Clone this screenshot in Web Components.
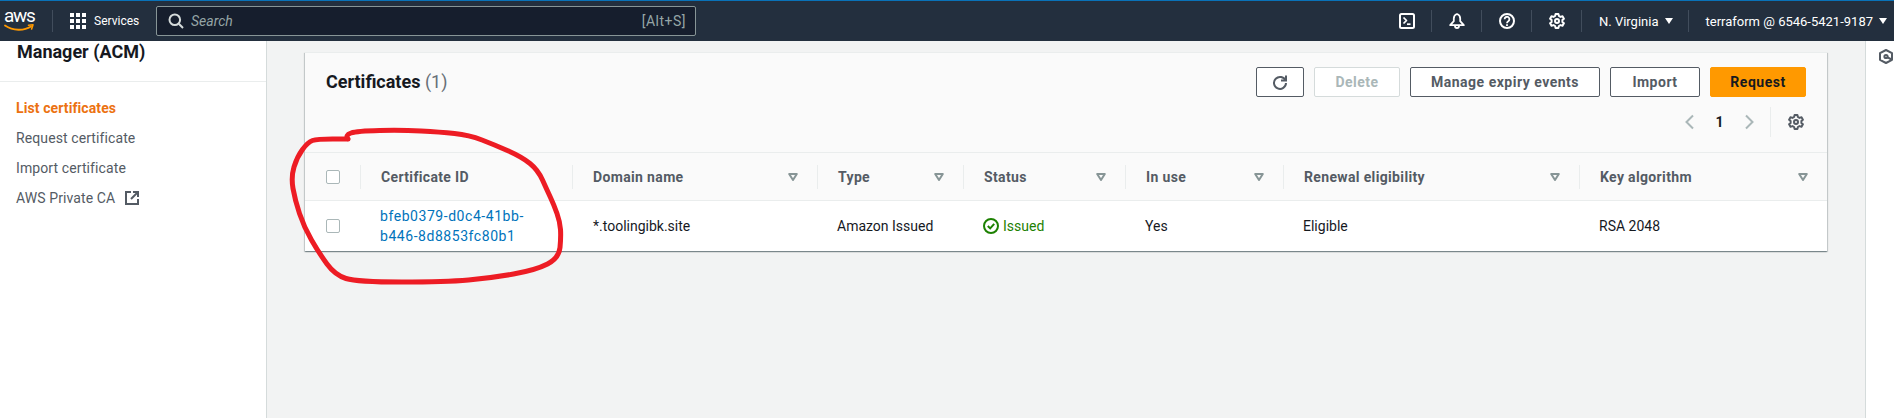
<!DOCTYPE html>
<html lang="en">
<head>
<meta charset="utf-8">
<title>Certificates</title>
<style>
    html, body{
        margin: 0;
        height: 418px;
        overflow: hidden;
        font-family: Roboto, "Liberation Sans", sans-serif;
        font-size: 14px;
        color: #16191f;
    }
    body{
        display: flex;
        flex-direction: column;
    }
</style>
</head>
<body>
    <aws-topbar></aws-topbar>
    <app-layout>
        <side-nav slot="nav"></side-nav>
        <cert-card></cert-card>
    </app-layout>
    <red-scribble></red-scribble>

<script>
    (() => {
        'use strict';

        const GEAR = `<svg width="16" height="16" viewBox="0 0 16 16" fill="none" stroke="currentColor" stroke-width="2" stroke-linejoin="round">
            <path d="M6.6 1h2.8l.5 2 1.6.9 2-.6 1.4 2.4-1.5 1.4v1.8l1.5 1.4-1.4 2.4-2-.6-1.6.9-.5 2H6.6l-.5-2-1.6-.9-2 .6-1.4-2.4 1.5-1.4V7.1L1.1 5.7l1.4-2.4 2 .6 1.6-.9z"/>
            <circle cx="8" cy="8" r="2"/></svg>`;

        class AwsTopbar extends HTMLElement{
            constructor(){
                super();
                this.attachShadow({mode: 'open'}).innerHTML = `
                <style>
                    :host{
                        display: flex;
                        flex: none;
                        align-items: center;
                        height: 40px;
                        box-sizing: content-box;
                        border-top: 1px solid #0972b8;
                        background-color: #232f3e;
                        color: #fff;
                        font-size: 13px;
                        padding-right: 7px;
                        position: relative;
                        z-index: 2;
                    }
                    svg{ display: block; flex: none; }
                    .logo{
                        flex: none;
                        width: 30px;
                        margin-left: 4px;
                    }
                    .logo span{
                        display: block;
                        font-size: 19px;
                        letter-spacing: -1.3px;
                        line-height: 14px;
                    }
                    .sep{
                        flex: none;
                        width: 1px;
                        height: 22px;
                        margin: 0 17px 0 16px;
                        background-color: #414d5c;
                    }
                    .logoSep{ margin: 0 17px 0 18px; }
                    .services{
                        flex: none;
                        width: 45px;
                        margin-left: 8px;
                        font-size: 12px;
                        white-space: nowrap;
                    }
                    .search{
                        display: flex;
                        align-items: center;
                        box-sizing: border-box;
                        width: 540px;
                        height: 30px;
                        margin-left: 17px;
                        padding: 0 9px 0 11px;
                        border: 1px solid #879596;
                        border-radius: 2px;
                        background-color: #161e2d;
                        color: #95a5a6;
                        font-size: 14px;
                    }
                    .search i{ margin-left: 7px; flex: 1; }
                    .search span{ letter-spacing: .5px; }
                    .right{ display: flex; align-items: center; margin-left: auto; }
                    .caret{
                        flex: none;
                        margin-left: 6px;
                        border-left: 4px solid transparent;
                        border-right: 4px solid transparent;
                        border-top: 6px solid #fff;
                    }
                </style>
                <div class="logo">
                    <span>aws</span>
                    <svg width="30" height="10" viewBox="0 0 30 10" fill="none" stroke="#f90" stroke-linecap="round" stroke-linejoin="round">
                        <path d="M1 2.5C9 8 20 8 27 3.5" stroke-width="1.8"/>
                        <path d="M24.5 2.2 29 1.8 27.6 6" stroke-width="1.6"/>
                    </svg>
                </div>
                <span class="sep logoSep"></span>
                <svg width="16" height="16" viewBox="0 0 16 16" fill="#fff" shape-rendering="crispEdges">
                    <rect width="4" height="4"/><rect x="6" width="4" height="4"/><rect x="12" width="4" height="4"/>
                    <rect y="6" width="4" height="4"/><rect x="6" y="6" width="4" height="4"/><rect x="12" y="6" width="4" height="4"/>
                    <rect y="12" width="4" height="4"/><rect x="6" y="12" width="4" height="4"/><rect x="12" y="12" width="4" height="4"/>
                </svg>
                <span class="services">Services</span>
                <div class="search">
                    <svg width="16" height="16" viewBox="0 0 16 16" fill="none" stroke="#d5dbdb" stroke-width="2">
                        <circle cx="6.8" cy="6.8" r="5.3"/><path d="M10.8 10.8 15 15"/>
                    </svg>
                    <i>Search</i>
                    <span>[Alt+S]</span>
                </div>
                <div class="right">
                    <svg width="16" height="16" viewBox="0 0 16 16" fill="none" stroke="#fff" stroke-width="2" stroke-linejoin="round">
                        <rect x="1" y="1" width="14" height="14" rx="1.5"/>
                        <path d="M4.5 4.5 7.5 7.5 4.5 10.5" stroke-width="1.7"/><path d="M8 11.2h3.5" stroke-width="1.7"/>
                    </svg>
                    <span class="sep"></span>
                    <svg width="16" height="16" viewBox="0 0 16 16" fill="none" stroke="#fff" stroke-width="1.8" stroke-linejoin="round">
                        <path d="M8 1C6 1.6 4.8 3.2 4.8 5.5v2.7L1.2 12.2h13.6l-3.6-4V5.5C11.2 3.2 10 1.6 8 1z"/>
                        <path d="M6 13a2 2 0 0 0 4 0"/>
                    </svg>
                    <span class="sep"></span>
                    <svg width="16" height="16" viewBox="0 0 16 16" fill="none" stroke="#fff" stroke-width="2">
                        <circle cx="8" cy="8" r="7"/>
                        <path d="M5.6 6.2a2.4 2.4 0 1 1 3.7 2C8.4 8.8 8 9.2 8 10.2" stroke-width="1.8"/>
                        <path d="M8 11.2v1.8" stroke-width="1.8"/>
                    </svg>
                    <span class="sep"></span>
                    ${GEAR}
                    <span class="sep"></span>
                    <span>N. Virginia</span><span class="caret"></span>
                    <span class="sep" style="margin:0 17px 0 15px"></span>
                    <span>terraform @ 6546-5421-9187</span><span class="caret"></span>
                </div>`;
            }
        }

        class AppLayout extends HTMLElement{
            constructor(){
                super();
                this.attachShadow({mode: 'open'}).innerHTML = `
                <style>
                    :host{
                        display: flex;
                        flex: 1;
                        min-height: 0;
                    }
                    .main{
                        flex: 1;
                        min-width: 0;
                        padding: 11px 38px 0;
                        background-color: #f2f3f3;
                        overflow: hidden;
                    }
                    .rail{
                        flex: none;
                        box-sizing: border-box;
                        width: 29px;
                        padding: 8px 0 0 13px;
                        border-left: 1px solid #d5dbdb;
                        background-color: #fff;
                    }
                    svg{ display: block; }
                </style>
                <slot name="nav"></slot>
                <div class="main">
                    <slot></slot>
                </div>
                <div class="rail">
                    <svg width="14" height="15" viewBox="0 0 14 15" fill="none" stroke="#545b64" stroke-width="2" stroke-linejoin="round">
                        <path d="M7 1 13 4.2v6.6L7 14 1 10.8V4.2z"/>
                        <circle cx="7" cy="7.5" r="1.6"/><path d="M8.6 8.4 12.5 10.5"/>
                    </svg>
                </div>`;
            }
        }

        class SideNav extends HTMLElement{
            constructor(){
                super();
                this.attachShadow({mode: 'open'}).innerHTML = `
                <style>
                    :host{
                        display: block;
                        flex: none;
                        box-sizing: border-box;
                        width: 267px;
                        border-right: 1px solid #d5dbdb;
                        background-color: #fff;
                        color: #545b64;
                    }
                    h2{
                        margin: 0;
                        height: 40px;
                        padding-left: 17px;
                        border-bottom: 1px solid #eaeded;
                        font-size: 18px;
                        font-weight: 700;
                        line-height: 22px;
                        color: #16191f;
                    }
                    ul{
                        list-style: none;
                        margin: 0;
                        padding: 11px 16px 0;
                        letter-spacing: .1px;
                    }
                    li{
                        display: flex;
                        align-items: center;
                        height: 30px;
                    }
                    .active{ color: #ec7211; font-weight: 700; }
                    svg{ margin-left: 9px; }
                </style>
                <h2>Manager (ACM)</h2>
                <ul>
                    <li class="active">List certificates</li>
                    <li>Request certificate</li>
                    <li>Import certificate</li>
                    <li>AWS Private CA
                        <svg width="16" height="16" viewBox="0 0 16 16" fill="none" stroke="#545b64" stroke-width="2">
                            <path d="M7 2H2v12h12V9"/><path d="M9 2h5v5"/><path d="M14 2 7 9"/>
                        </svg>
                    </li>
                </ul>`;
            }
        }

        class AwsBtn extends HTMLElement{
            constructor(){
                super();
                this.attachShadow({mode: 'open'}).innerHTML = `
                <style>
                    :host{
                        display: inline-flex;
                        align-items: center;
                        justify-content: center;
                        box-sizing: border-box;
                        height: 30px;
                        border: 1px solid #545b64;
                        border-radius: 2px;
                        background-color: #fff;
                        color: #545b64;
                        font-weight: 700;
                        letter-spacing: .5px;
                    }
                    :host([variant="disabled"]){
                        border-color: #d5dbdb;
                        color: #aab7b8;
                    }
                    :host([variant="primary"]){
                        border-color: #f90;
                        background-color: #f90;
                        color: #16191f;
                    }
                </style>
                <slot></slot>`;
            }
        }

        class CertCard extends HTMLElement{
            constructor(){
                super();
                this.attachShadow({mode: 'open'}).innerHTML = `
                <style>
                    :host{
                        display: block;
                        border-top: 1px solid #eaeded;
                        background-color: #fafafa;
                        box-shadow: 0 1px 1px 0 rgba(0,28,36,.3), 1px 1px 1px 0 rgba(0,28,36,.15), -1px 1px 1px 0 rgba(0,28,36,.15);
                    }
                    .head{
                        display: flex;
                        justify-content: space-between;
                        height: 99px;
                        box-sizing: border-box;
                        padding: 14px 21px 0;
                    }
                    h2{
                        margin: 0;
                        font-size: 18px;
                        line-height: 30px;
                        font-weight: 700;
                    }
                    h2 span{ font-weight: 400; color: #687078; }
                    .tools{
                        display: flex;
                        flex-direction: column;
                        align-items: flex-end;
                        gap: 10px;
                    }
                    .actions{ display: flex; gap: 10px; }
                    .pager{
                        display: flex;
                        align-items: center;
                        height: 30px;
                        padding-right: 2px;
                        color: #545b64;
                    }
                    .pager b{ width: 43px; text-align: center; color: #16191f; font-weight: 700; }
                    .pager i{
                        width: 1px;
                        height: 30px;
                        margin: 0 17px 0 13px;
                        background-color: #eaeded;
                    }
                    svg{ display: block; }
                </style>
                <div class="head">
                    <h2>Certificates <span>(1)</span></h2>
                    <div class="tools">
                        <div class="actions">
                            <aws-btn style="width:48px">
                                <svg width="16" height="16" viewBox="0 0 16 16" fill="none" stroke="currentColor" stroke-width="2">
                                    <path d="M13.5 6.5A6 6 0 1 0 14 9"/><path d="M14 1.5V6.5H9" stroke-linejoin="miter"/>
                                </svg>
                            </aws-btn>
                            <aws-btn variant="disabled" style="width:86px">Delete</aws-btn>
                            <aws-btn style="width:190px">Manage expiry events</aws-btn>
                            <aws-btn style="width:90px">Import</aws-btn>
                            <aws-btn variant="primary" style="width:96px">Request</aws-btn>
                        </div>
                        <div class="pager">
                            <svg width="16" height="16" viewBox="0 0 16 16" fill="none" stroke="#aab7b8" stroke-width="2"><path d="M11 1.5 4.5 8 11 14.5"/></svg>
                            <b>1</b>
                            <svg width="16" height="16" viewBox="0 0 16 16" fill="none" stroke="#aab7b8" stroke-width="2"><path d="M5 1.5 11.5 8 5 14.5"/></svg>
                            <i></i>
                            ${GEAR}
                        </div>
                    </div>
                </div>
                <cert-table></cert-table>`;
            }
        }

        class CertTable extends HTMLElement{
            constructor(){
                super();
                const columns = [
                    {title: 'Certificate ID', sort: false},
                    {title: 'Domain name', sort: true},
                    {title: 'Type', sort: true},
                    {title: 'Status', sort: true},
                    {title: 'In use', sort: true},
                    {title: 'Renewal eligibility', sort: true},
                    {title: 'Key algorithm', sort: true}
                ];
                const headers = columns.map((column) => `
                    <div class="th"><div class="thInner">
                        <span>${column.title}</span>
                        ${column.sort ? '<svg width="10" height="8" viewBox="0 0 10 8" fill="#fafafa" stroke="#879596" stroke-width="2" stroke-linejoin="round"><path d="M1.2 1h7.6L5 7z"/></svg>' : ''}
                    </div></div>`).join('');
                this.attachShadow({mode: 'open'}).innerHTML = `
                <style>
                    :host{
                        display: grid;
                        grid-template-columns: 55px 212px 245px 146px 162px 158px 296px 1fr;
                        grid-template-rows: 48px 50px;
                        border-top: 1px solid #eaeded;
                    }
                    .th, .check{
                        display: flex;
                        align-items: center;
                    }
                    .th{
                        border-bottom: 1px solid #eaeded;
                        color: #545b64;
                        font-weight: 700;
                        letter-spacing: .35px;
                    }
                    .thInner{
                        flex: 1;
                        display: flex;
                        align-items: center;
                        justify-content: space-between;
                        height: 24px;
                        padding: 0 19px 0 20px;
                        border-left: 1px solid #eaeded;
                    }
                    .check{
                        padding-left: 21px;
                    }
                    .head{ border-bottom: 1px solid #eaeded; }
                    .box{
                        box-sizing: border-box;
                        width: 14px;
                        height: 14px;
                        border: 1px solid #aab7b8;
                        border-radius: 2px;
                        background-color: #fff;
                    }
                    .td{
                        display: flex;
                        align-items: center;
                        padding-left: 20px;
                        background-color: #fff;
                        line-height: 20px;
                    }
                    .domain{ padding-left: 21px; }
                    .row{ background-color: #fff; }
                    .link{ color: #0073bb; width: 150px; letter-spacing: .55px; }
                    .status{ color: #1d8102; gap: 4px; }
                    svg{ display: block; }
                </style>
                <div class="check head"><span class="box"></span></div>
                ${headers}
                <div class="check row"><span class="box"></span></div>
                <div class="td"><span class="link">bfeb0379-d0c4-41bb-b446-8d8853fc80b1</span></div>
                <div class="td domain">*.toolingibk.site</div>
                <div class="td">Amazon Issued</div>
                <div class="td status">
                    <svg width="16" height="16" viewBox="0 0 16 16" fill="none" stroke="#1d8102" stroke-width="2">
                        <circle cx="8" cy="8" r="7"/><path d="M4.8 8 7.2 10.4 11.2 5.8"/>
                    </svg>
                    Issued
                </div>
                <div class="td">Yes</div>
                <div class="td">Eligible</div>
                <div class="td">RSA 2048</div>`;
            }
        }

        // hand drawn circle on top of the screenshot
        class RedScribble extends HTMLElement{
            constructor(){
                super();
                const points = [[348,139],[345,135],[357,131],[402,130],[440,132],[469,135],[495,145],[522,157],[538,170],
                    [547,190],[554,205],[560,222],[561,237],[559,258],[536,270],[491,278],[446,282],[357,282],[335,275],
                    [319,253],[304,227],[295,200],[291,177],[297,157],[308,142],[317,139],[348,139]];
                let d = `M${points[0].join(' ')}`;
                for(let i = 1; i < points.length - 1; i++){
                    const midX = (points[i][0] + points[i + 1][0]) / 2;
                    const midY = (points[i][1] + points[i + 1][1]) / 2;
                    d += `Q${points[i].join(' ')} ${midX} ${midY}`;
                }
                d += `L${points[points.length - 1].join(' ')}`;
                this.attachShadow({mode: 'open'}).innerHTML = `
                <style>
                    :host{
                        position: absolute;
                        top: 0;
                        left: 0;
                        z-index: 3;
                        pointer-events: none;
                    }
                    svg{ display: block; }
                </style>
                <svg width="1894" height="418" fill="none" stroke="#ed1c24" stroke-width="5" stroke-linecap="round" stroke-linejoin="round"><path d="${d}"/></svg>`;
            }
        }

        customElements.define('aws-topbar', AwsTopbar);
        customElements.define('app-layout', AppLayout);
        customElements.define('side-nav', SideNav);
        customElements.define('aws-btn', AwsBtn);
        customElements.define('cert-card', CertCard);
        customElements.define('cert-table', CertTable);
        customElements.define('red-scribble', RedScribble);
    })();
</script>
</body>
</html>
